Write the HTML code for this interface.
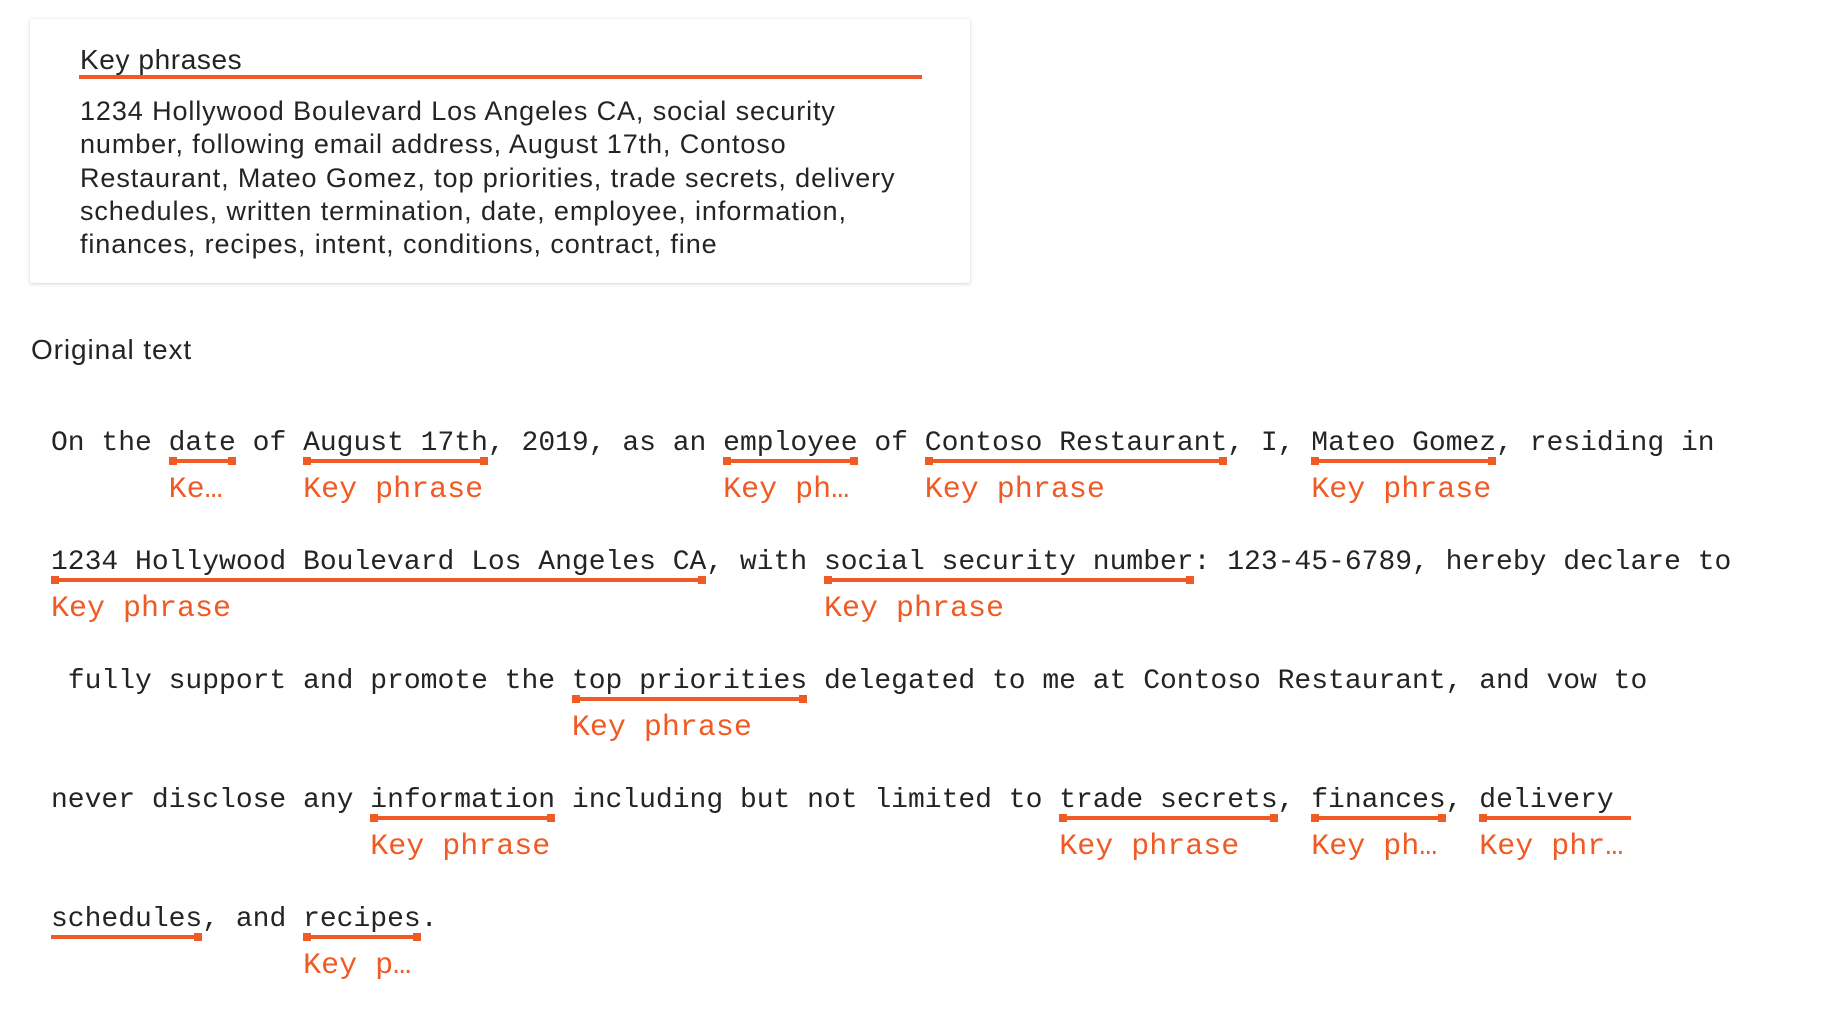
<!DOCTYPE html>
<html><head><meta charset="utf-8"><style>
body{margin:0;background:#fff;width:1846px;height:1028px;position:relative;overflow:hidden;font-family:"Liberation Sans",sans-serif;color:#242424}
.card{position:absolute;left:30px;top:19px;width:951px;height:264px;background:#fff;box-shadow:0 1px 4px rgba(0,0,0,.16),0 0 1px rgba(0,0,0,.1);border-radius:2px;width:940px}
.title{position:absolute;left:80px;top:43px;font-size:28px;letter-spacing:0.6px;line-height:34px}
.bar{position:absolute;left:79px;top:75px;width:843px;height:4px;background:#f05a24}
.body{position:absolute;left:80px;top:95px;width:900px;font-size:27px;letter-spacing:0.9px;line-height:33.3px;white-space:nowrap}
.orig{position:absolute;left:31px;top:333px;font-size:28px;letter-spacing:0.9px;line-height:34px}
.ln{position:absolute;left:51px;font-family:"Liberation Mono",monospace;font-size:28px;line-height:34px;white-space:pre;color:#242424}
.k{position:relative;display:inline-block}
.k::after{content:"";position:absolute;left:0;right:0;top:32px;height:4px;background:#f05a24}
.k i{position:absolute;top:30px;width:8px;height:8px;background:#f05a24}
.k i.l{left:0}.k i.r{right:0}
.k b{position:absolute;left:0;top:46px;font-weight:normal;font-size:30px;color:#f05a24;overflow:hidden;text-overflow:ellipsis;white-space:nowrap}
</style></head><body>
<div class="card"></div>
<div class="title">Key phrases</div>
<div class="bar"></div>
<div class="body">1234 Hollywood Boulevard Los Angeles CA, social security<br>number, following email address, August 17th, Contoso<br>Restaurant, Mateo Gomez, top priorities, trade secrets, delivery<br>schedules, written termination, date, employee, information,<br>finances, recipes, intent, conditions, contract, fine</div>
<div class="orig">Original text</div>

<div class="ln" style="top:427px">On the <span class="k">date<i class="l"></i><i class="r"></i><b style="width:67px">Key phrase</b></span> of <span class="k">August 17th<i class="l"></i><i class="r"></i><b style="width:185px">Key phrase</b></span>, 2019, as an <span class="k">employee<i class="l"></i><i class="r"></i><b style="width:134px">Key phrase</b></span> of <span class="k">Contoso Restaurant<i class="l"></i><i class="r"></i><b style="width:302px">Key phrase</b></span>, I, <span class="k">Mateo Gomez<i class="l"></i><i class="r"></i><b style="width:185px">Key phrase</b></span>, residing in</div>

<div class="ln" style="top:546px"><span class="k">1234 Hollywood Boulevard Los Angeles CA<i class="l"></i><i class="r"></i><b style="width:655px">Key phrase</b></span>, with <span class="k">social security number<i class="l"></i><i class="r"></i><b style="width:370px">Key phrase</b></span>: 123-45-6789, hereby declare to</div>

<div class="ln" style="top:665px"> fully support and promote the <span class="k">top priorities<i class="l"></i><i class="r"></i><b style="width:235px">Key phrase</b></span> delegated to me at Contoso Restaurant, and vow to</div>

<div class="ln" style="top:784px">never disclose any <span class="k">information<i class="l"></i><i class="r"></i><b style="width:185px">Key phrase</b></span> including but not limited to <span class="k">trade secrets<i class="l"></i><i class="r"></i><b style="width:218px">Key phrase</b></span>, <span class="k">finances<i class="l"></i><i class="r"></i><b style="width:134px">Key phrase</b></span>, <span class="k">delivery <i class="l"></i><b style="width:151px">Key phrase</b></span></div>

<div class="ln" style="top:903px"><span class="k">schedules<i class="r"></i></span>, and <span class="k">recipes<i class="l"></i><i class="r"></i><b style="width:118px">Key phrase</b></span>.</div>
</body></html>
